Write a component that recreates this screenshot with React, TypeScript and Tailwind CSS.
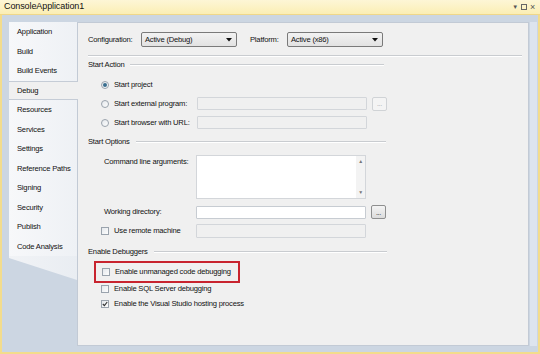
import React from 'react';

const tabs = [
  'Application',
  'Build',
  'Build Events',
  'Debug',
  'Resources',
  'Services',
  'Settings',
  'Reference Paths',
  'Signing',
  'Security',
  'Publish',
  'Code Analysis',
];

const font = { fontFamily: '"Liberation Sans", Arial, sans-serif' };

const Radio: React.FC<{ checked?: boolean }> = ({ checked }) => (
  <span className="w-[8px] h-[8px] rounded-full border border-[#9aa3ad] bg-gradient-to-br from-[#e4e8ec] to-[#fdfdfd] flex items-center justify-center shrink-0">
    {checked && <span className="w-[4px] h-[4px] rounded-full bg-[#3a6e8f]" />}
  </span>
);

const Check: React.FC<{ checked?: boolean }> = ({ checked }) => (
  <span className="w-[8px] h-[8px] border border-[#9aa3ad] bg-gradient-to-br from-[#e4e8ec] to-[#fdfdfd] flex items-center justify-center shrink-0">
    {checked && (
      <svg width="6" height="6" viewBox="0 0 6 6">
        <path d="M0.8 3 L2.4 4.6 L5.2 1" stroke="#333" strokeWidth="1.1" fill="none" />
      </svg>
    )}
  </span>
);

const Box: React.FC<{ white?: boolean; h?: string }> = ({ white, h = 'h-[13px]' }) => (
  <div
    className={`w-[170px] shrink-0 ${h} border rounded-[1px] ${
      white ? 'bg-white border-[#c7ccd2]' : 'bg-[#f0f0f0] border-[#d3d6da]'
    }`}
  />
);

const Dots: React.FC<{ enabled?: boolean }> = ({ enabled }) => (
  <div
    className={`ml-[5px] w-[15px] h-[14px] rounded-[2px] border flex items-center justify-center text-[7px] leading-none ${
      enabled
        ? 'border-[#8e8f8f] bg-gradient-to-b from-[#f4f4f4] to-[#dcdcdc] text-[#222]'
        : 'border-[#d0d3d6] bg-[#f4f4f4] text-[#aaa]'
    }`}
  >
    ...
  </div>
);

const Select: React.FC<{ label: string; w: string }> = ({ label, w }) => (
  <div
    className={`${w} h-[15px] rounded-[2px] border border-[#7a7a7a] bg-gradient-to-b from-[#f2f2f2] to-[#e2e2e2] flex items-center pl-[3px] pr-[4px]`}
  >
    <span className="flex-1">{label}</span>
    <svg width="6" height="4" viewBox="0 0 6 4">
      <path d="M0 0 H6 L3 3.5 Z" fill="#111" />
    </svg>
  </div>
);

const Section: React.FC<{ title: string; mt: string; w: string }> = ({ title, mt, w }) => (
  <div className={`${mt} h-[12px] flex items-center`}>
    <span>{title}</span>
    <div className={`ml-[6px] ${w} h-[2px] border-t border-[#c9ccd0] border-b border-b-white`} />
  </div>
);

export default function App() {
  return (
    <div
      className="w-[540px] h-[354px] bg-[#f3dc8c] flex flex-col text-[7.6px] tracking-[-0.2px] text-[#111] overflow-hidden whitespace-nowrap"
      style={font}
    >
      {/* title bar */}
      <div className="h-[15px] bg-gradient-to-b from-[#fdf6d6] to-[#fbeeb4] border-b border-[#efd78a] flex items-center px-[4px] shrink-0">
        <span className="text-[9px] tracking-[-0.1px] flex-1">ConsoleApplication1</span>
        <div className="flex items-center gap-[3px] text-[#555] pr-[1px]">
          <span className="text-[6px]">▼</span>
          <span className="w-[6px] h-[6px] border border-[#666]" />
          <span className="text-[9px] leading-none">×</span>
        </div>
      </div>

      {/* body */}
      <div className="flex-1 ml-[2px] mr-[2px] mb-[2px] bg-[#ccd6e2] flex pt-[7px] pl-[7px] pr-[1px] pb-[6px]">
        {/* tabs */}
        <div className="w-[68px] flex flex-col shrink-0">
          <div className="bg-gradient-to-r from-[#f7f8fa] to-[#eef1f5] flex flex-col">
            {tabs.map((t) => (
              <div
                key={t}
                className={`h-[19.5px] flex items-center pl-[8px] ${
                  t === 'Debug'
                    ? 'bg-[#f0f0f0] border-y border-[#c5ccd6] relative z-10 -mr-px'
                    : ''
                }`}
              >
                {t}
              </div>
            ))}
          </div>
          <div className="h-[24px] bg-gradient-to-r from-[#f1f3f6] to-[#e9edf2] [clip-path:polygon(0_0,100%_0,100%_100%,0_8%)]" />
        </div>

        {/* content panel */}
        <div className="w-[452px] bg-[#f0f0f0] border border-[#c2cad5] pl-[10px] pr-[6px] flex flex-col">
          <div className="mt-[9px] h-[15px] flex items-center">
            <span className="w-[53px]">Configuration:</span>
            <Select label="Active (Debug)" w="w-[96px]" />
            <span className="ml-[13px] w-[37px]">Platform:</span>
            <Select label="Active (x86)" w="w-[96px]" />
          </div>
          <div className="mt-[8px] h-[2px] border-t border-[#c9ccd0] border-b border-b-white" />

          <Section title="Start Action" mt="mt-[2px]" w="w-[254px]" />
          <div className="pl-[13px] flex flex-col mt-[4px]">
            <div className="h-[19px] flex items-center">
              <Radio checked />
              <span className="ml-[5px]">Start project</span>
            </div>
            <div className="h-[19px] flex items-center">
              <Radio />
              <span className="ml-[5px] w-[83px]">Start external program:</span>
              <Box />
              <Dots />
            </div>
            <div className="h-[19px] flex items-center">
              <Radio />
              <span className="ml-[5px] w-[83px]">Start browser with URL:</span>
              <Box />
            </div>
          </div>

          <Section title="Start Options" mt="mt-[4px]" w="w-[250px]" />
          <div className="pl-[16px] flex flex-col">
            <div className="mt-[7px] flex">
              <span className="w-[92px] pt-[1px]">Command line arguments:</span>
              <div className="w-[170px] h-[44px] border border-[#d3d6da] bg-white flex justify-end">
                <div className="w-[9px] bg-[#f3f3f3] flex flex-col items-center justify-between py-[2px] text-[5px] text-[#777]">
                  <span>▲</span>
                  <span>▼</span>
                </div>
              </div>
            </div>
            <div className="mt-[6px] h-[14px] flex items-center">
              <span className="w-[92px]">Working directory:</span>
              <Box white />
              <Dots enabled />
            </div>
            <div className="mt-[5px] h-[14px] flex items-center -ml-[3px]">
              <Check />
              <span className="ml-[5px] w-[82px]">Use remote machine</span>
              <Box h="h-[14px]" />
            </div>
          </div>

          <Section title="Enable Debuggers" mt="mt-[8px]" w="w-[233px]" />
          <div className="mt-[3px] ml-[6px] w-[146px] h-[22px] border-2 border-[#c8242f] flex items-center pl-[6px]">
            <Check />
            <span className="ml-[5px]">Enable unmanaged code debugging</span>
          </div>
          <div className="pl-[13px] flex flex-col">
            <div className="h-[11px] flex items-center">
              <Check />
              <span className="ml-[5px]">Enable SQL Server debugging</span>
            </div>
            <div className="mt-[4px] h-[11px] flex items-center">
              <Check checked />
              <span className="ml-[5px]">Enable the Visual Studio hosting process</span>
            </div>
          </div>
        </div>
        <div className="flex-1 bg-[#dde4ee] ml-[1px]" />
      </div>
    </div>
  );
}
